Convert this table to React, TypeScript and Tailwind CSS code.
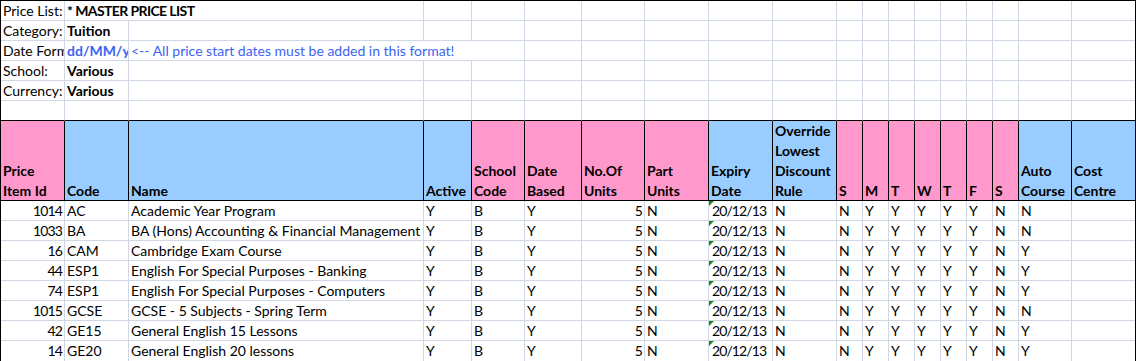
import React from 'react';

type Item = {
  id: number;
  code: string;
  name: string;
  auto: string;
};

const items: Item[] = [
  { id: 1014, code: 'AC', name: 'Academic Year Program', auto: 'N' },
  { id: 1033, code: 'BA', name: 'BA (Hons) Accounting & Financial Management', auto: 'N' },
  { id: 16, code: 'CAM', name: 'Cambridge Exam Course', auto: 'Y' },
  { id: 44, code: 'ESP1', name: 'English For Special Purposes - Banking', auto: 'Y' },
  { id: 74, code: 'ESP1', name: 'English For Special Purposes - Computers', auto: 'Y' },
  { id: 1015, code: 'GCSE', name: 'GCSE - 5 Subjects - Spring Term', auto: 'N' },
  { id: 42, code: 'GE15', name: 'General English 15 Lessons', auto: 'Y' },
  { id: 14, code: 'GE20', name: 'General English 20 lessons', auto: 'Y' },
];

const days = ['N', 'Y', 'Y', 'Y', 'Y', 'Y', 'N'];

const PINK = 'bg-[#ff99cc]';
const BLUE = 'bg-[#99ccff]';

const headers: { lines: string[]; bg: string }[] = [
  { lines: ['Price', 'Item Id'], bg: PINK },
  { lines: ['Code'], bg: BLUE },
  { lines: ['Name'], bg: BLUE },
  { lines: ['Active'], bg: BLUE },
  { lines: ['School', 'Code'], bg: PINK },
  { lines: ['Date', 'Based'], bg: PINK },
  { lines: ['No.Of', 'Units'], bg: PINK },
  { lines: ['Part', 'Units'], bg: PINK },
  { lines: ['Expiry', 'Date'], bg: BLUE },
  { lines: ['Override', 'Lowest', 'Discount', 'Rule'], bg: BLUE },
  { lines: ['S'], bg: PINK },
  { lines: ['M'], bg: PINK },
  { lines: ['T'], bg: PINK },
  { lines: ['W'], bg: PINK },
  { lines: ['T'], bg: PINK },
  { lines: ['F'], bg: PINK },
  { lines: ['S'], bg: PINK },
  { lines: ['Auto', 'Course'], bg: BLUE },
  { lines: ['Cost', 'Centre'], bg: BLUE },
];

const COLS = 19;

type TopCell = { span?: number; text?: string; className?: string };

// info rows above the table; spans stand in for Excel's text overflow
const topRows: TopCell[][] = [
  [{ text: 'Price List:' }, { span: 2, text: '* MASTER PRICE LIST', className: 'font-bold tracking-[-0.6px]' }],
  [{ text: 'Category:' }, { text: 'Tuition', className: 'font-bold' }],
  [
    { text: 'Date Format:' },
    { text: 'dd/MM/yy', className: 'font-bold text-[#3d63f2]' },
    { span: 3, text: '<-- All price start dates must be added in this format!', className: 'text-[#3d63f2]' },
  ],
  [{ text: 'School:' }, { text: 'Various', className: 'font-bold' }],
  [{ text: 'Currency:' }, { text: 'Various', className: 'font-bold' }],
  [],
];

const Cell = ({ children, className = '' }: { children?: React.ReactNode; className?: string }) => (
  <div className={`h-[20px] overflow-hidden whitespace-nowrap px-[2px] leading-[19px] ${className}`}>{children}</div>
);

const TopRow = ({ cells, last }: { cells: TopCell[]; last: boolean }) => {
  const filled: TopCell[] = [...cells];
  let used = cells.reduce((n, c) => n + (c.span ?? 1), 0);
  while (used < COLS) {
    filled.push({});
    used++;
  }
  let col = 0;
  return (
    <>
      {filled.map((c, i) => {
        col += c.span ?? 1;
        const span = c.span === 2 ? 'col-span-2' : c.span === 3 ? 'col-span-3' : '';
        const right = col === COLS ? '' : 'border-r border-r-[#d0d7e5]';
        const bottom = last ? 'border-b border-b-black' : 'border-b border-b-[#d0d7e5]';
        return (
          <Cell key={i} className={`${span} ${right} ${bottom} ${c.className ?? ''}`}>
            {c.text}
          </Cell>
        );
      })}
    </>
  );
};

const App: React.FC = () => {
  return (
    <div className="w-[1136px] h-[361px] bg-white font-['Lato',sans-serif] text-[14px] text-black">
      <div className="grid grid-cols-[64px_64px_295px_48px_53px_57px_63px_64px_64px_64px_26px_26px_26px_26px_26px_26px_26px_53px_63px] border border-black">
        {/* Header info block */}
        {topRows.map((r, i) => (
          <TopRow key={i} cells={r} last={i === topRows.length - 1} />
        ))}

        {/* Column headers */}
        {headers.map((h, i) => (
          <div
            key={i}
            className={`h-[80px] flex flex-col justify-end overflow-hidden whitespace-nowrap px-[2px] font-bold border-b border-black ${
              i === COLS - 1 ? '' : 'border-r'
            } ${h.bg}`}
          >
            {h.lines.map((l, j) => (
              <div key={j} className={j === h.lines.length - 1 ? 'leading-[19px]' : 'leading-[20px]'}>
                {l}
              </div>
            ))}
          </div>
        ))}

        {/* Price items */}
        {items.map((it, r) => {
          const lastRow = r === items.length - 1;
          const values: { v: string | number; right?: boolean; num?: boolean; flag?: boolean }[] = [
            { v: it.id, right: true, num: true },
            { v: it.code },
            { v: it.name },
            { v: 'Y' },
            { v: 'B' },
            { v: 'Y' },
            { v: 5, right: true, num: true },
            { v: 'N' },
            { v: '20/12/13', num: true, flag: true },
            { v: 'N' },
            ...days.map((d) => ({ v: d })),
            { v: it.auto },
            { v: '' },
          ];
          return values.map((c, i) => (
            <Cell
              key={`${r}-${i}`}
              className={`relative ${c.right ? 'text-right' : ''} ${c.num ? 'tracking-[-0.9px]' : ''} ${
                c.flag ? 'pl-[3px]' : ''
              } ${i === COLS - 1 ? '' : 'border-r border-r-[#d0d7e5]'} ${lastRow ? '' : 'border-b border-b-[#d0d7e5]'}`}
            >
              {c.flag && (
                <span className="absolute left-0 top-0 w-0 h-0 border-t-[5px] border-r-[5px] border-t-[#1b8a1b] border-r-transparent" />
              )}
              {c.v}
            </Cell>
          ));
        })}
      </div>
    </div>
  );
};

export default App;
